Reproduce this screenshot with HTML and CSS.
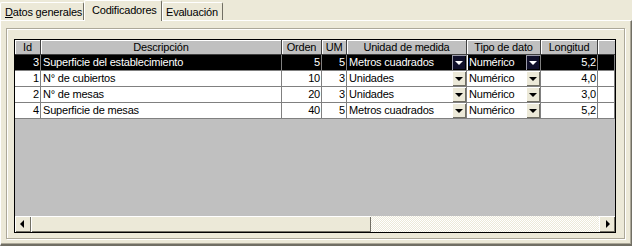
FILE: index.html
```html
<!DOCTYPE html>
<html lang="es">
<head>
    <meta charset="UTF-8">
    <title>Codificadores</title>
    <link rel="stylesheet" href="styles.css">
</head>
<body>

<div class="window">
    <div class="tabs">
        <div class="tab"><u>D</u>atos generales</div>
        <div class="tab active">Codificadores</div>
        <div class="tab">Evaluación</div>
    </div>

    <div class="panel">
        <div class="frame">
            <div class="grid">
                <div class="row head">
                    <div class="cell">Id</div>
                    <div class="cell">Descripción</div>
                    <div class="cell">Orden</div>
                    <div class="cell">UM</div>
                    <div class="cell">Unidad de medida</div>
                    <div class="cell">Tipo de dato</div>
                    <div class="cell">Longitud</div>
                    <div class="cell"></div>
                </div>

                <div class="row selected">
                    <div class="cell num">3</div>
                    <div class="cell">Superficie del establecimiento</div>
                    <div class="cell num">5</div>
                    <div class="cell num">5</div>
                    <div class="cell combo"><span>Metros cuadrados</span><i class="drop"></i></div>
                    <div class="cell combo focus"><span>Numérico</span><i class="drop"></i></div>
                    <div class="cell num">5,2</div>
                    <div class="cell"></div>
                </div>
                <div class="row">
                    <div class="cell num">1</div>
                    <div class="cell">N° de cubiertos</div>
                    <div class="cell num">10</div>
                    <div class="cell num">3</div>
                    <div class="cell combo"><span>Unidades</span><i class="drop"></i></div>
                    <div class="cell combo"><span>Numérico</span><i class="drop"></i></div>
                    <div class="cell num">4,0</div>
                    <div class="cell"></div>
                </div>
                <div class="row">
                    <div class="cell num">2</div>
                    <div class="cell">N° de mesas</div>
                    <div class="cell num">20</div>
                    <div class="cell num">3</div>
                    <div class="cell combo"><span>Unidades</span><i class="drop"></i></div>
                    <div class="cell combo"><span>Numérico</span><i class="drop"></i></div>
                    <div class="cell num">3,0</div>
                    <div class="cell"></div>
                </div>
                <div class="row">
                    <div class="cell num">4</div>
                    <div class="cell">Superficie de mesas</div>
                    <div class="cell num">40</div>
                    <div class="cell num">5</div>
                    <div class="cell combo"><span>Metros cuadrados</span><i class="drop"></i></div>
                    <div class="cell combo"><span>Numérico</span><i class="drop"></i></div>
                    <div class="cell num">5,2</div>
                    <div class="cell"></div>
                </div>

                <div class="empty"></div>

                <div class="hscroll">
                    <div class="sbtn left"><i></i></div>
                    <div class="thumb"></div>
                    <div class="track"></div>
                    <div class="sbtn right"><i></i></div>
                </div>
            </div>
        </div>
    </div>
</div>

</body>
</html>
```

FILE: styles.css
```css
:root {
    --face: #ece9d8;
    --light: #ffffff;
    --shadow: #aca899;
    --dark: #716f64;
    --grid-gray: #c0c0c0;
    --line: #808080;
}
html, body {
    margin: 0;
    padding: 0;
}
body {
    width: 632px;
    height: 246px;
    overflow: hidden;
    background: var(--face);
    font-family: "Liberation Sans", Arial, sans-serif;
    font-size: 11px;
    letter-spacing: -0.2px;
    color: #000;
}
* {
    box-sizing: border-box;
}

/* pestañas */
.tabs {
    display: flex;
    align-items: flex-end;
    height: 20px;
}
.tab {
    height: 18px;
    padding: 3px 5px 0 5px;
    border-top: 1px solid var(--light);
    border-left: 1px solid var(--light);
    border-right: 1px solid var(--dark);
    border-radius: 2px 2px 0 0;
    white-space: nowrap;
}
.tab:first-child {
    width: 84px;
    padding-left: 4px;
}
.tab.active {
    height: 21px;
    margin-bottom: -1px;
    width: 78px;
    padding: 3px 0 0 7px;
    position: relative;
    background: var(--face);
    z-index: 1;
}
.tab:last-child {
    width: 61px;
    padding-left: 3px;
}

/* panel de la pestaña */
.panel {
    height: 226px;
    padding: 7px 0 5px 5px;
    border-top: 1px solid var(--light);
    border-left: 1px solid var(--light);
    border-right: 1px solid var(--dark);
    border-bottom: 2px solid var(--dark);
    box-shadow: inset -1px 0 var(--shadow), inset 0 -1px var(--shadow);
}
.frame {
    width: 619px;
    height: 211px;
    padding: 10px 8px 5px 7px;
    border: 1px solid var(--shadow);
    box-shadow: inset 1px 1px var(--light), 1px 1px var(--light);
}

/* rejilla */
.grid {
    width: 602px;
    height: 194px;
    border: 1px solid #000;
    background: var(--grid-gray);
    display: flex;
    flex-direction: column;
}
.row {
    display: grid;
    grid-template-columns: 26px 241px 40px 25px 120px 74px 57px 1fr;
    height: 16px;
    background: #fff;
    border-bottom: 1px solid var(--line);
}
.cell {
    border-right: 1px solid var(--line);
    padding: 1px 2px 0 2px;
    white-space: nowrap;
    overflow: hidden;
    line-height: 13px;
}
.cell.num {
    text-align: right;
    padding-right: 1px;
}
.row.head {
    height: 15px;
    background: var(--grid-gray);
    border-bottom: 1px solid #404040;
}
.row.head .cell {
    text-align: center;
    border-right: 1px solid #404040;
    box-shadow: inset 1px 1px var(--light);
    padding-top: 1px;
}
.row.head .cell:last-child {
    border-right: none;
}
.row.selected {
    background: #000;
    color: #fff;
}
.cell.combo {
    display: flex;
    justify-content: space-between;
    padding-right: 0;
}
.cell.focus {
    box-shadow: inset 1px 0 #fff, inset -1px 0 #fff;
}
.drop {
    width: 14px;
    height: 15px;
    margin-top: -1px;
    flex-shrink: 0;
    position: relative;
    background: var(--face);
    box-shadow: inset 1px 1px var(--light), inset -1px -1px var(--dark);
}
.drop::after {
    content: "";
    position: absolute;
    left: 3px;
    top: 6px;
    border-left: 4px solid transparent;
    border-right: 4px solid transparent;
    border-top: 4px solid #000;
}
.selected .drop {
    background: #10102a;
    box-shadow: inset 1px 1px #9a9aa8, inset -1px -1px #000;
}
.selected .drop::after {
    border-top-color: #fff;
}
.empty {
    flex-grow: 1;
}

/* barra de desplazamiento */
.hscroll {
    display: flex;
    height: 16px;
}
.sbtn, .thumb {
    background: var(--face);
    box-shadow: inset 1px 1px var(--light), inset -1px -1px var(--dark);
}
.sbtn {
    width: 16px;
    position: relative;
}
.sbtn i {
    position: absolute;
    top: 4px;
    border-top: 4px solid transparent;
    border-bottom: 4px solid transparent;
}
.sbtn.left i {
    left: 5px;
    border-right: 4px solid #000;
}
.sbtn.right i {
    left: 7px;
    border-left: 4px solid #000;
}
.thumb {
    width: 340px;
}
.track {
    flex-grow: 1;
    background: repeating-conic-gradient(#fff 0 25%, var(--face) 0 50%) 0 0 / 2px 2px;
}
```
